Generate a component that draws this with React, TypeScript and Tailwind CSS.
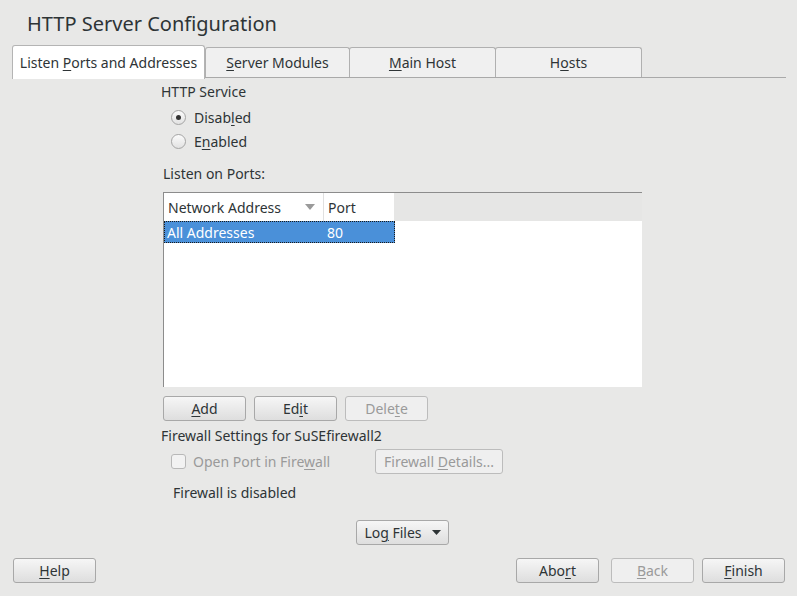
import { ReactNode } from 'react';

function Btn({
    children,
    width = 'w-[83px]',
    disabled = false,
    className = '',
}: {
    children: ReactNode;
    width?: string;
    disabled?: boolean;
    className?: string;
}) {
    return (
        <div
            className={`flex h-[25px] shrink-0 items-center justify-center rounded-[3px] border text-[14px] ${width} ${
                disabled
                    ? 'border-[#bcbcbc] bg-[#efefef] text-[#9a9a9a]'
                    : 'border-[#a8a8a8] bg-gradient-to-b from-[#f6f6f6] to-[#dedede] text-[#2e3436]'
            } ${className}`}
        >
            {children}
        </div>
    );
}

function Radio({ checked, children }: { checked?: boolean; children: ReactNode }) {
    return (
        <div className="flex h-[24px] items-center">
            <div className="ml-[10px] flex h-[15px] w-[15px] items-center justify-center rounded-full border border-[#a4a4a4] bg-gradient-to-b from-[#fbfbfb] to-[#e2e2e2]">
                {checked && <div className="h-[5px] w-[5px] rounded-full bg-[#333]" />}
            </div>
            <span className="ml-[8px] text-[14px] text-[#2e3436]">{children}</span>
        </div>
    );
}

export default function App() {
    return (
        <div className="flex h-[596px] w-[797px] flex-col bg-[#e8e8e7] font-['Noto_Sans',sans-serif] text-[#2e3436]">
            <div className="flex h-[45px] items-center pl-[27px] pt-[3px] text-[20px] text-[#2e3436]">
                HTTP Server Configuration
            </div>

            {/* tabs */}
            <div className="flex h-[33px] items-end pl-[12px] pr-[11px]">
                <div className="relative z-10 -mb-px flex h-[34px] w-[193px] items-center justify-center rounded-t-[3px] border border-b-0 border-[#b4b4b4] bg-white text-[14px]">
                    <span>
                        Listen <u className="underline-offset-2">P</u>orts and Addresses
                    </span>
                </div>
                <div className="flex flex-1 items-end border-b border-[#a9a9a9]">
                    <div className="flex h-[30px] w-[145px] items-center justify-center rounded-t-[3px] border border-b-0 border-[#b0b0b0] bg-[#f0f0f0] text-[14px]">
                        <span>
                            <u className="underline-offset-2">S</u>erver Modules
                        </span>
                    </div>
                    <div className="-ml-px flex h-[30px] w-[147px] items-center justify-center rounded-t-[3px] border border-b-0 border-[#b0b0b0] bg-[#f0f0f0] text-[14px]">
                        <span>
                            <u className="underline-offset-2">M</u>ain Host
                        </span>
                    </div>
                    <div className="-ml-px flex h-[30px] w-[147px] items-center justify-center rounded-t-[3px] border border-b-0 border-[#b0b0b0] bg-[#f0f0f0] text-[14px]">
                        <span>
                            H<u className="underline-offset-2">o</u>sts
                        </span>
                    </div>
                </div>
            </div>

            {/* content */}
            <div className="flex flex-col pl-[161px]">
                <div className="mb-[2px] mt-[1px] flex h-[24px] items-center text-[14px]">HTTP Service</div>
                <Radio checked>
                    Disab<u className="underline-offset-2">l</u>ed
                </Radio>
                <Radio>
                    E<u className="underline-offset-2">n</u>abled
                </Radio>
                <div className="mt-[9px] flex h-[22px] items-center pl-[2px] text-[14px]">Listen on Ports:</div>

                <div className="ml-[2px] mt-[8px] flex h-[195px] w-[479px] flex-col border-l border-t border-[#8c8c8c] bg-white">
                    <div className="flex h-[28px] bg-[#e6e6e5]">
                        <div className="flex w-[160px] items-center justify-between border-r border-[#e0e0e0] bg-white pl-[4px] pr-[8px] text-[14px]">
                            <span>Network Address</span>
                            <svg width="10" height="6" viewBox="0 0 10 6">
                                <path d="M0 0h10L5 6z" fill="#9a9a9a" />
                            </svg>
                        </div>
                        <div className="flex w-[70px] items-center bg-white pl-[4px] text-[14px]">Port</div>
                    </div>
                    <div className="flex h-[22px] w-[231px] items-center border border-dotted border-[#1a1a1a] bg-[#4a90d9] text-[14px] text-white">
                        <span className="w-[162px] pl-[2px]">All Addresses</span>
                        <span>80</span>
                    </div>
                </div>

                <div className="ml-[2px] mt-[9px] flex gap-[8px]">
                    <Btn>
                        <span>
                            <u className="underline-offset-2">A</u>dd
                        </span>
                    </Btn>
                    <Btn>
                        <span>
                            Ed<u className="underline-offset-2">i</u>t
                        </span>
                    </Btn>
                    <Btn disabled>
                        <span>
                            Dele<u className="underline-offset-2">t</u>e
                        </span>
                    </Btn>
                </div>

                <div className="mt-[3px] flex h-[22px] items-center text-[14px]">Firewall Settings for SuSEfirewall2</div>
                <div className="mt-[3px] flex h-[25px] items-center">
                    <div className="ml-[10px] h-[15px] w-[15px] rounded-[3px] border border-[#b8b8b8] bg-[#f2f2f2]" />
                    <span className="ml-[7px] w-[182px] text-[14px] text-[#9a9a9a]">
                        Open Port in Fire<u className="underline-offset-2">w</u>all
                    </span>
                    <Btn disabled width="w-[128px]">
                        <span>
                            Firewall <u className="underline-offset-2">D</u>etails...
                        </span>
                    </Btn>
                </div>
                <div className="mt-[7px] flex h-[22px] items-center pl-[12px] text-[14px]">Firewall is disabled</div>
            </div>

            <div className="mt-[17px] flex justify-center pl-[8px]">
                <Btn width="w-[93px]" className="gap-[10px]">
                    <span>
                        Lo<u className="underline-offset-2">g</u> Files
                    </span>
                    <svg width="9" height="5" viewBox="0 0 9 5">
                        <path d="M0 0h9L4.5 5z" fill="#2e3436" />
                    </svg>
                </Btn>
            </div>

            <div className="mt-[13px] flex items-center pl-[13px] pr-[12px]">
                <Btn>
                    <span>
                        <u className="underline-offset-2">H</u>elp
                    </span>
                </Btn>
                <div className="flex-1" />
                <Btn>
                    <span>
                        Abo<u className="underline-offset-2">r</u>t
                    </span>
                </Btn>
                <Btn disabled className="ml-[12px]">
                    <span>
                        <u className="underline-offset-2">B</u>ack
                    </span>
                </Btn>
                <Btn className="ml-[8px]">
                    <span>
                        <u className="underline-offset-2">F</u>inish
                    </span>
                </Btn>
            </div>
        </div>
    );
}
